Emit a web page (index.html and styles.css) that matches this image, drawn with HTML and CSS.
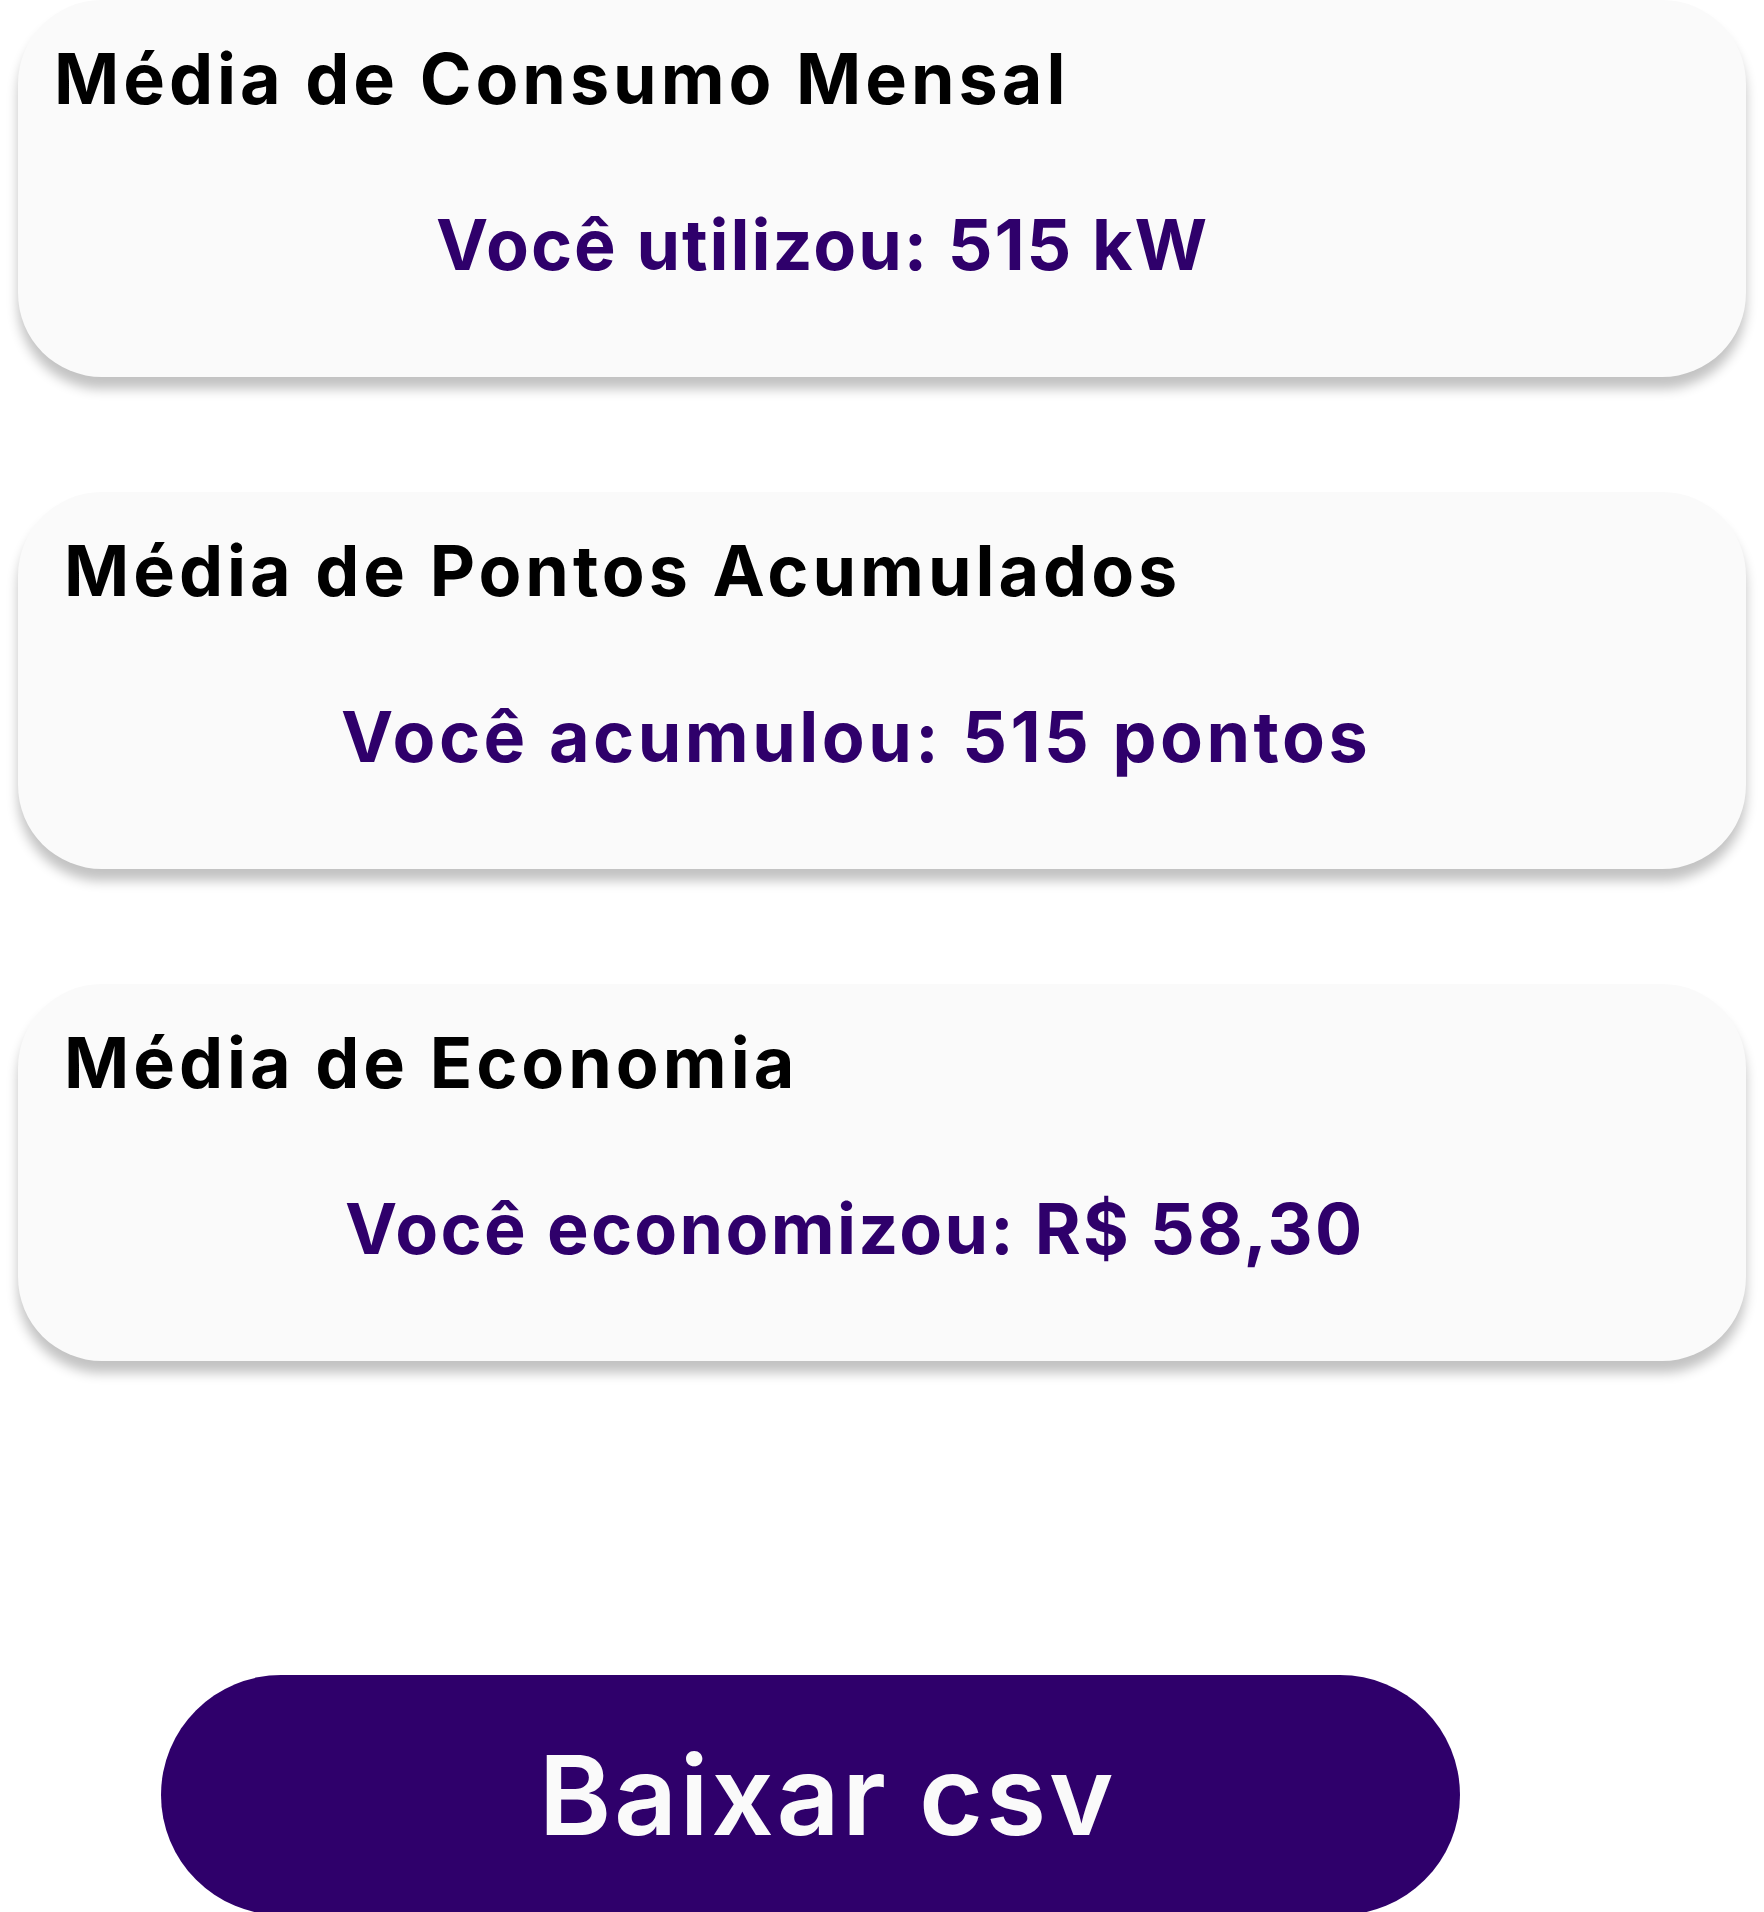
FILE: index.html
```html
<!DOCTYPE html>
<html lang="pt-BR">
<head>
<meta charset="utf-8">
<title>Médias</title>
<link rel="stylesheet" href="styles.css">
</head>
<body>
<main class="page">
  <section class="card card--first">
    <h2 class="card-title">Média de Consumo Mensal</h2>
    <p class="card-value value--consumo">Você utilizou: 515 kW</p>
  </section>
  <section class="card">
    <h2 class="card-title">Média de Pontos Acumulados</h2>
    <p class="card-value value--pontos">Você acumulou: 515 pontos</p>
  </section>
  <section class="card">
    <h2 class="card-title">Média de Economia</h2>
    <p class="card-value value--economia">Você economizou: R$ 58,30</p>
  </section>
  <div class="actions">
    <button class="btn-csv" type="button">Baixar csv</button>
  </div>
</main>
</body>
</html>
```
FILE: styles.css
```css
* { box-sizing: border-box; }
html, body { margin: 0; padding: 0; background: #ffffff; }
body {
  font-family: "Inter", "Noto Sans", sans-serif;
  width: 1764px;
  height: 1912px;
  overflow: hidden;
}
.page {
  display: flex;
  flex-direction: column;
  padding-left: 18px;
}
.card {
  width: 1728px;
  height: 377px;
  background: #fafafa;
  border-radius: 84px;
  box-shadow: 0 12px 12px rgba(0, 0, 0, 0.24);
  padding: 37px 0 0 46px;
  margin-bottom: 115px;
  display: flex;
  flex-direction: column;
}
.card--first { padding-left: 36px; }
.card-title {
  margin: 0;
  font-size: 70px;
  line-height: 84px;
  font-weight: 700;
  color: #000000;
  letter-spacing: 4px;
}
.card-value {
  margin: 82px 0 0 0;
  font-size: 70px;
  line-height: 84px;
  font-weight: 700;
  color: #2f006b;
  letter-spacing: 2.5px;
}
.value--consumo { padding-left: 382px; letter-spacing: 2px; }
.value--pontos { padding-left: 277px; letter-spacing: 3.5px; }
.value--economia { padding-left: 281px; letter-spacing: 2.3px; }
.actions {
  margin-top: 199px;
  padding-left: 143px;
}
.btn-csv {
  width: 1299px;
  height: 240px;
  border: none;
  border-radius: 120px;
  background: #2f006b;
  color: #fafafa;
  font-family: "Inter", "Noto Sans", sans-serif;
  font-size: 110px;
  font-weight: 600;
  letter-spacing: 2.7px;
  padding: 0 0 0 34px;
  cursor: pointer;
}
```
